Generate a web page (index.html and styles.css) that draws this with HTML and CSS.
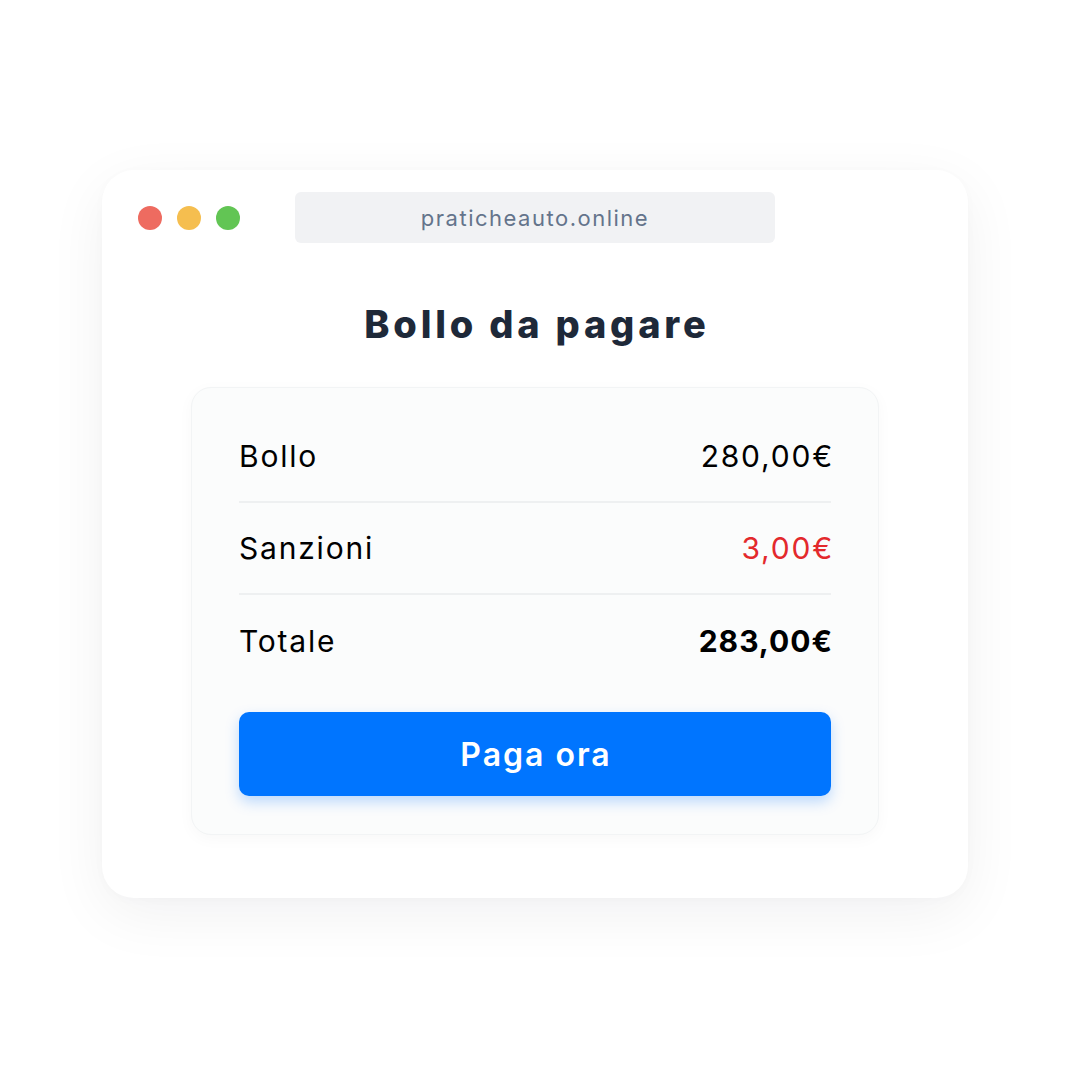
FILE: index.html
```html
<!DOCTYPE html>
<html lang="it">
<head>
<meta charset="utf-8">
<title>Bollo da pagare</title>
<link rel="stylesheet" href="styles.css">
</head>
<body>
<div class="stage">
  <div class="window">
    <div class="toolbar">
      <div class="dots">
        <span class="dot dot-red"></span>
        <span class="dot dot-yellow"></span>
        <span class="dot dot-green"></span>
      </div>
      <div class="address">praticheauto.online</div>
      <div class="spacer"></div>
    </div>
    <h1 class="title">Bollo da pagare</h1>
    <div class="card">
      <div class="row">
        <span class="label">Bollo</span>
        <span class="value">280,00€</span>
      </div>
      <div class="row">
        <span class="label">Sanzioni</span>
        <span class="value value-red">3,00€</span>
      </div>
      <div class="row row-last">
        <span class="label">Totale</span>
        <span class="value value-bold">283,00€</span>
      </div>
      <button class="pay">Paga ora</button>
    </div>
  </div>
</div>
</body>
</html>
```

FILE: styles.css
```css
html, body {
  margin: 0;
  padding: 0;
  background: #ffffff;
}
body {
  font-family: Inter, "Noto Sans", "DejaVu Sans", sans-serif;
  width: 1080px;
  height: 1080px;
  overflow: hidden;
}
.stage {
  padding: 170px 0 0 102px;
}
.window {
  width: 866px;
  height: 728px;
  box-sizing: border-box;
  background: #ffffff;
  border-radius: 32px;
  box-shadow: 0 16px 60px rgba(15, 23, 42, 0.06), 0 2px 12px rgba(15, 23, 42, 0.02);
  padding: 22px 36px 0 36px;
}
.toolbar {
  display: grid;
  grid-template-columns: 1fr 480px 1fr;
  align-items: center;
  height: 51px;
}
.dots {
  display: flex;
  gap: 15px;
  align-items: center;
}
.dot {
  width: 24px;
  height: 24px;
  border-radius: 50%;
  display: block;
}
.dot-red { background: #ee6b60; }
.dot-yellow { background: #f5be4f; }
.dot-green { background: #62c554; }
.address {
  height: 51px;
  background: #f1f2f4;
  border-radius: 6px;
  display: flex;
  align-items: center;
  justify-content: center;
  color: #64748b;
  font-size: 22px;
  letter-spacing: 1.5px;
}
.title {
  margin: 59px 0 41px 0;
  text-align: center;
  font-size: 38px;
  line-height: 44px;
  font-weight: 800;
  color: #1e2939;
  letter-spacing: 3.8px;
  text-indent: 4px;
}
.card {
  width: 688px;
  margin: 0 auto;
  box-sizing: border-box;
  background: #fbfcfc;
  border: 1px solid #f2f4f5;
  border-radius: 20px;
  box-shadow: 0 4px 16px rgba(15, 23, 42, 0.03);
  padding: 23px 47px 38px 47px;
}
.row {
  display: flex;
  justify-content: space-between;
  align-items: center;
  height: 90px;
  border-bottom: 2px solid #eef0f1;
  font-size: 30px;
  color: #000000;
  letter-spacing: 1.8px;
}
.row-last {
  border-bottom: none;
  height: 92px;
}
.value {
  margin-right: -3px;
}
.value-red {
  color: #e3292c;
}
.value-bold {
  font-weight: 700;
  letter-spacing: 1px;
  margin-right: -2px;
}
.pay {
  display: block;
  width: 100%;
  height: 84px;
  margin-top: 25px;
  border: none;
  border-radius: 10px;
  background: #0075ff;
  color: #ffffff;
  font-family: inherit;
  font-size: 32px;
  font-weight: 600;
  letter-spacing: 2px;
  text-indent: 2px;
  box-shadow: 0 6px 14px rgba(0, 117, 255, 0.25);
  cursor: pointer;
}
```
